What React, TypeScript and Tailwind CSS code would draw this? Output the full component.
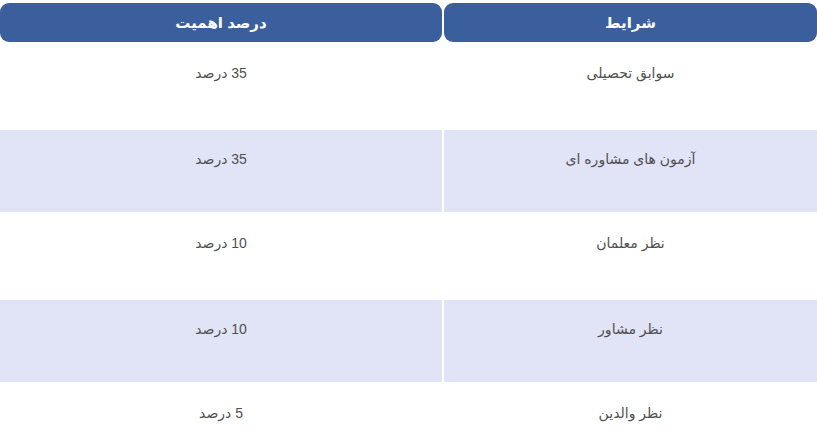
import React from 'react';

const rows = [
  { cond: 'سوابق تحصیلی', weight: '35 درصد' },
  { cond: 'آزمون های مشاوره ای', weight: '35 درصد' },
  { cond: 'نظر معلمان', weight: '10 درصد' },
  { cond: 'نظر مشاور', weight: '10 درصد' },
  { cond: 'نظر والدین', weight: '5 درصد' },
];

export default function App() {
  return (
    <div
      dir="rtl"
      className="w-[817px] h-[447px] overflow-hidden bg-white pt-[1px]"
      style={{ fontFamily: '"Liberation Sans", "DejaVu Sans", sans-serif' }}
    >
      <table className="w-[819px] border-separate border-spacing-[2px] -mr-[2px] table-fixed">
        <colgroup>
          <col className="w-[373px]" />
          <col className="w-[442px]" />
        </colgroup>
        <thead>
          <tr>
            <th className="h-[39px] rounded-[9px] bg-[#3b5e9c] text-white text-[15px] font-bold text-center align-middle pt-[2px]">
              شرایط
            </th>
            <th className="h-[39px] rounded-[9px] bg-[#3b5e9c] text-white text-[15px] font-bold text-center align-middle pt-[2px]">
              درصد اهمیت
            </th>
          </tr>
        </thead>
        <tbody>
          {rows.map((r, i) => {
            const alt = i % 2 === 1;
            return (
              <tr key={i} className={alt ? 'bg-[#e1e3f7] h-[82px]' : 'bg-white h-[84px]'}>
                <td className="align-top pt-[19px] text-center text-[14px] text-[#505050]">
                  {r.cond}
                </td>
                <td className="align-top pt-[19px] text-center text-[14px] text-[#505050]">
                  {r.weight}
                </td>
              </tr>
            );
          })}
        </tbody>
      </table>
    </div>
  );
}
